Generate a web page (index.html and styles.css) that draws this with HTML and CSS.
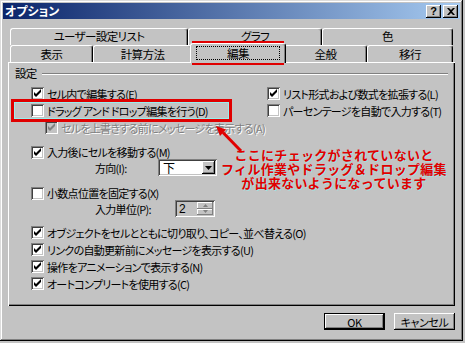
FILE: index.html
```html
<!DOCTYPE html>
<html lang="ja">
<head>
    <meta charset="UTF-8">
    <title>オプション</title>
    <link rel="stylesheet" href="styles.css">
</head>
<body>
<div class="window">
    <div class="titlebar">
        <span class="title">オプション</span>
        <div class="title-buttons">
            <span class="tbtn">?</span>
            <span class="tbtn">
                <svg width="8" height="7" viewBox="0 0 8 7"><path d="M0 0h2l2 2 2-2h2L5 3.5 8 7H6L4 5 2 7H0l3-3.5z" fill="#000"/></svg>
            </span>
        </div>
    </div>

    <div class="tabs">
        <div class="tabrow back">
            <div class="tab w178">ユーザー設定リスト</div>
            <div class="tab w134">グラフ</div>
            <div class="tab w131">色</div>
        </div>
        <div class="tabrow">
            <div class="tab w83">表示</div>
            <div class="tab w99">計算方法</div>
            <div class="tab w92 selected"><span class="focus">編集</span></div>
            <div class="tab w83">全般</div>
            <div class="tab w86">移行</div>
        </div>
    </div>

    <div class="panel">
        <div class="group-head"><span>設定</span><div class="rule"></div></div>

        <div class="top">
            <div class="col-left">
                <div class="check-row"><span class="box checked"></span>セル内で編集する(E)</div>
                <div class="check-row"><span class="box"></span>ドラッグ アンド ドロップ編集を行う(D)</div>
                <div class="check-row indent disabled"><span class="box checked"></span>セルを上書きする前にメッセージを表示する(A)</div>
            </div>
            <div class="col-right">
                <div class="check-row"><span class="box checked"></span>リスト形式および数式を拡張する(L)</div>
                <div class="check-row"><span class="box"></span>パーセンテージを自動で入力する(T)</div>
            </div>
        </div>

        <div class="check-row short gap9"><span class="box checked"></span>入力後にセルを移動する(M)</div>
        <div class="field-row">
            <span class="field-label w63">方向(I):</span>
            <div class="select">
                <span class="select-text">下</span>
                <span class="drop-btn"><svg width="7" height="4" viewBox="0 0 7 4"><path d="M0 0h7L3.5 4z" fill="#000"/></svg></span>
            </div>
        </div>

        <div class="check-row short gap10"><span class="box"></span>小数点位置を固定する(X)</div>
        <div class="field-row">
            <span class="field-label w80">入力単位(P):</span>
            <div class="spinner">
                <span class="spin-text">2</span>
                <span class="spin-btns">
                    <span class="spin-btn"><svg width="5" height="3" viewBox="0 0 5 3"><path d="M2.5 0L5 3H0z" fill="#808080"/></svg></span>
                    <span class="spin-btn"><svg width="5" height="3" viewBox="0 0 5 3"><path d="M0 0h5L2.5 3z" fill="#808080"/></svg></span>
                </span>
            </div>
        </div>

        <div class="bottom-list">
            <div class="check-row"><span class="box checked"></span>オブジェクトをセルとともに切り取り、コピー、並べ替える(O)</div>
            <div class="check-row"><span class="box checked"></span>リンクの自動更新前にメッセージを表示する(U)</div>
            <div class="check-row"><span class="box checked"></span>操作をアニメーションで表示する(N)</div>
            <div class="check-row"><span class="box checked"></span>オートコンプリートを使用する(C)</div>
        </div>
    </div>

    <div class="footer">
        <button class="btn default">OK</button>
        <button class="btn">キャンセル</button>
    </div>

    <!-- annotations drawn over the dialog -->
    <div class="mark mark-tab"></div>
    <div class="mark mark-row"></div>
    <svg class="arrow" width="465" height="343" viewBox="0 0 465 343">
        <line x1="223" y1="132.5" x2="241" y2="151" stroke="#e00000" stroke-width="3"/>
        <polygon points="216,126 226,129.5 220,136" fill="#e00000"/>
    </svg>
    <div class="note">
        <div>ここにチェックがされていないと</div>
        <div>フィル作業やドラッグ＆ドロップ編集</div>
        <div>が出来ないようになっています</div>
    </div>
</div>
</body>
</html>
```

FILE: styles.css
```css
* {
    box-sizing: border-box;
}

body {
    margin: 0;
    background-color: #c3c3c3;
    font-family: "Noto Sans CJK JP", sans-serif;
    font-size: 11px;
    letter-spacing: -0.7px;
    font-feature-settings: "palt";
    color: #000;
}

.window {
    position: relative;
    width: 463px;
    height: 341px;
    padding: 3px;
    background-color: #c3c3c3;
    box-shadow: inset -1px -1px #000, inset 1px 1px #dcdcdc, inset -2px -2px #808080, inset 2px 2px #fff;
}

/* title bar */
.titlebar {
    height: 16px;
    display: flex;
    align-items: center;
    justify-content: space-between;
    padding: 0 2px;
    background: linear-gradient(to right, #0a246a, #a6caf0);
}

.title {
    color: #fff;
    font-weight: bold;
    font-size: 12px;
    line-height: 16px;
    letter-spacing: 0;
}

.title-buttons {
    display: flex;
    gap: 2px;
}

.tbtn {
    width: 15px;
    height: 13px;
    display: flex;
    align-items: center;
    justify-content: center;
    background-color: #c3c3c3;
    box-shadow: inset -1px -1px #000, inset 1px 1px #fff, inset -2px -2px #808080;
    font-family: "Liberation Sans", Arial, sans-serif;
    font-weight: bold;
    font-size: 11px;
    line-height: 13px;
    letter-spacing: 0;
}

/* tabs */
.tabs {
    margin: 9px 0 0 7px;
}

.tabrow {
    display: flex;
    height: 17px;
}

.tab {
    height: 17px;
    display: flex;
    align-items: center;
    justify-content: center;
    border-radius: 3px 3px 0 0;
    border-top: 1px solid #fff;
    border-left: 1px solid #fff;
    border-right: 1px solid #000;
    box-shadow: inset -1px 0 #808080;
    background-color: #c3c3c3;
    font-size: 11.5px;
    letter-spacing: -0.6px;
}

.tabrow.back .tab {
    align-items: flex-start;
    padding-top: 0;
    line-height: 14px;
}

.w178 { width: 178px; }
.w134 { width: 134px; }
.w131 { width: 131px; }
.w83 { width: 83px; }
.w99 { width: 99px; }
.w92 { width: 92px; }
.w86 { width: 86px; }

.tab.selected {
    position: relative;
    z-index: 1;
    height: 20px;
    margin: -2px -2px -1px -2px;
    width: 96px;
    padding-bottom: 1px;
}

.focus {
    width: 82px;
    height: 12px;
    display: flex;
    align-items: center;
    justify-content: center;
    outline: 1px dotted #000;
}

/* main panel */
.panel {
    margin-left: 5px;
    width: 447px;
    height: 244px;
    padding: 5px 7px 0 7px;
    box-shadow: inset 1px 1px #fff, inset -1px -1px #000, inset -2px -2px #808080;
}

.group-head {
    display: flex;
    align-items: center;
    height: 12px;
    gap: 5px;
}

.group-head span {
    font-size: 11.5px;
}

.rule {
    flex: 1;
    margin-top: 2px;
    border-top: 1px solid #808080;
    border-bottom: 1px solid #fff;
}

.top {
    display: flex;
    margin-top: 6px;
    padding-left: 16px;
}

.col-left {
    width: 236px;
}

.check-row {
    display: flex;
    align-items: center;
    height: 17px;
    gap: 3px;
    white-space: nowrap;
}

.check-row.short {
    height: 14px;
    margin-left: 16px;
}

.gap9 { margin-top: 9px; }
.gap10 { margin-top: 10px; }

.indent {
    padding-left: 14px;
}

.disabled {
    color: #808080;
    text-shadow: 1px 1px #fff;
}

.box {
    flex: none;
    width: 13px;
    height: 13px;
    background-color: #fff;
    box-shadow: inset 1px 1px #808080, inset -1px -1px #fff, inset 2px 2px #404040, inset -2px -2px #c3c3c3;
}

.box.checked {
    background: #fff url("data:image/svg+xml,%3Csvg xmlns='http://www.w3.org/2000/svg' width='13' height='13'%3E%3Cpath d='M3 5v3l2 2 5-5V2L5 7z' fill='%23000'/%3E%3C/svg%3E") no-repeat;
}

.disabled .box.checked {
    background: #c3c3c3 url("data:image/svg+xml,%3Csvg xmlns='http://www.w3.org/2000/svg' width='13' height='13'%3E%3Cpath d='M3 5v3l2 2 5-5V2L5 7z' fill='%23808080'/%3E%3C/svg%3E") no-repeat;
}

.field-row {
    display: flex;
    align-items: center;
    height: 17px;
    padding-left: 80px;
}

.w63 { width: 63px; }
.w80 { width: 80px; }

.select {
    width: 59px;
    height: 17px;
    display: flex;
    align-items: center;
    justify-content: space-between;
    padding: 2px;
    background-color: #fff;
    box-shadow: inset 1px 1px #808080, inset -1px -1px #fff, inset 2px 2px #404040, inset -2px -2px #c3c3c3;
}

.select-text {
    padding-left: 3px;
    font-size: 12px;
}

.drop-btn {
    width: 13px;
    height: 13px;
    display: flex;
    align-items: center;
    justify-content: center;
    background-color: #c3c3c3;
    box-shadow: inset -1px -1px #000, inset 1px 1px #fff, inset -2px -2px #808080;
}

.spinner {
    width: 40px;
    height: 17px;
    display: flex;
    align-items: center;
    justify-content: space-between;
    padding: 2px;
    background-color: #c3c3c3;
    box-shadow: inset 1px 1px #808080, inset -1px -1px #fff, inset 2px 2px #404040, inset -2px -2px #c3c3c3;
}

.spin-text {
    padding-left: 2px;
    font-family: "Liberation Sans", Arial, sans-serif;
    font-size: 12px;
    letter-spacing: 0;
}

.spin-btns {
    display: flex;
    flex-direction: column;
    width: 16px;
    height: 13px;
}

.spin-btn {
    flex: 1;
    display: flex;
    align-items: center;
    justify-content: center;
    box-shadow: inset -1px -1px #808080, inset 1px 1px #fff;
}

.bottom-list {
    margin-top: 7px;
    padding-left: 16px;
}

/* footer buttons */
.footer {
    display: flex;
    justify-content: flex-end;
    gap: 9px;
    margin-top: 7px;
    padding-right: 5px;
}

.btn {
    width: 61px;
    height: 17px;
    padding: 0;
    border: none;
    background-color: #c3c3c3;
    box-shadow: inset -1px -1px #000, inset 1px 1px #fff, inset -2px -2px #808080;
    font-family: "Noto Sans CJK JP", sans-serif;
    font-feature-settings: "palt";
    font-size: 11px;
    letter-spacing: -0.4px;
    color: #000;
}

.btn.default {
    box-shadow: inset 0 0 0 1px #000, inset -2px -2px #000, inset 2px 2px #fff, inset -3px -3px #808080;
}

/* red annotations */
.mark {
    position: absolute;
    border: 3px solid #e00000;
}

.mark-tab {
    left: 192px;
    top: 41px;
    width: 92px;
    height: 24px;
}

.mark-row {
    left: 11px;
    top: 99px;
    width: 221px;
    height: 23px;
    box-shadow: inset 0 0 0 1px #9ee;
}

.arrow {
    position: absolute;
    left: 0;
    top: 0;
}

.note {
    position: absolute;
    left: 212px;
    top: 148px;
    width: 244px;
    text-align: center;
    color: #e00000;
    font-weight: bold;
    font-size: 13px;
    line-height: 14px;
    letter-spacing: 0.3px;
    font-feature-settings: normal;
    white-space: nowrap;
    text-shadow: 1px 1px 0 rgba(150, 235, 235, 0.8);
}
```
